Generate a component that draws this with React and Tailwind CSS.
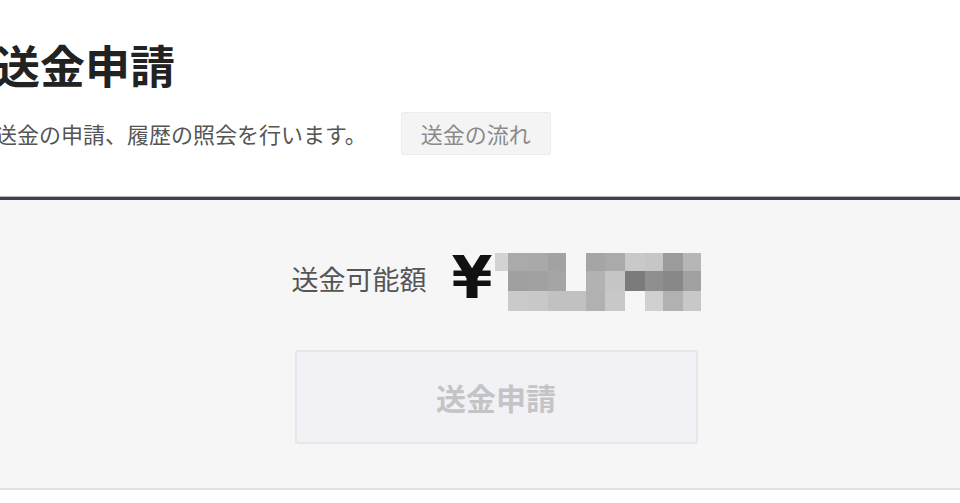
import React from "react";

const cols = [0, 13, 33, 53, 71, 91, 110, 130, 150, 168, 188, 206];
const rows = [0, 18, 38, 58];
const cells = [
  ["#d3d3d3", "#aaaaaa", "#a9a9a9", "#a2a2a2", null, "#a5a5a5", "#aaaaaa", "#c9c9c9", "#c6c6c6", "#9b9b9b", "#b6b6b6"],
  [null, "#a0a0a0", "#a1a1a1", "#a5a5a5", null, "#b2b2b2", "#c5c5c5", "#7b7b7b", "#8f8f8f", "#888888", "#a1a1a1"],
  [null, "#cacaca", "#c8c8c8", "#c1c1c1", "#c1c1c1", "#b1b1b1", "#c8c8c8", null, "#d0d0d0", "#b1b1b1", "#c8c8c8"],
];

function Mosaic() {
  return (
    <svg width="206" height="58" viewBox="0 0 206 58" className="block">
      {cells.map((row, r) =>
        row.map((c, i) =>
          c ? (
            <rect
              key={`${r}-${i}`}
              x={cols[i]}
              y={rows[r]}
              width={cols[i + 1] - cols[i]}
              height={rows[r + 1] - rows[r]}
              fill={c}
            />
          ) : null
        )
      )}
    </svg>
  );
}

export default function App() {
  return (
    <div
      className="w-[960px] h-[503px] bg-white overflow-hidden"
      style={{ fontFamily: '"Noto Sans CJK JP", "Noto Sans", sans-serif' }}
    >
      <header className="h-[196px] ml-[-5px]">
        <h1 className="pt-[42px] text-[45px] leading-[46px] font-bold text-[#222]">
          送金申請
        </h1>
        <div className="mt-[24px] flex items-center gap-[34px]">
          <p className="text-[22px] leading-[43px] text-[#555]">
            送金の申請、履歴の照会を行います。
          </p>
          <button className="h-[43px] px-[19px] border border-[#ececec] bg-[#f4f4f4] rounded-[2px] text-[22px] leading-[41px] text-[#8a8a8a]">
            送金の流れ
          </button>
        </div>
      </header>
      <div className="h-[1px] bg-[#b8b8bd]" />
      <div className="h-[3px] bg-[#40404c]" />
      <main className="h-[290px] bg-[#f6f6f6] border-b-2 border-[#e1e1e1] pt-[53px] pl-[32px] flex flex-col items-center">
        <div className="flex items-start h-[58px]">
          <span className="mt-[12px] text-[27px] leading-[27px] text-[#555]">
            送金可能額
          </span>
          <span
            className="ml-[25px] mt-[-5px] text-[59px] leading-[59px] font-bold text-[#111]"
            style={{ fontFamily: '"DejaVu Sans", sans-serif' }}
          >
            ¥
          </span>
          <div className="ml-[2px]">
            <Mosaic />
          </div>
        </div>
        <button
          disabled
          className="mt-[39px] w-[403px] h-[94px] bg-[#f2f2f6] border-2 border-[#e6e6e9] rounded-[3px] text-[30px] font-bold text-[#c4c4c6]"
        >
          送金申請
        </button>
      </main>
    </div>
  );
}
